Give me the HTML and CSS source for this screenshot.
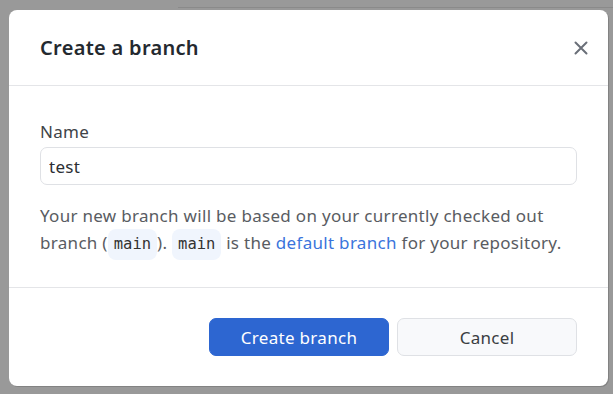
FILE: index.html
```html
<!DOCTYPE html>
<html lang="en">
<head>
    <meta charset="UTF-8">
    <title>Create a branch</title>
    <link rel="stylesheet" href="styles.css">
</head>
<body>
    <div class="backdrop-edge"></div>

    <!-- Create branch dialog -->
    <div class="dialog">
        <div class="dialog-header">
            <h1>Create a branch</h1>
            <button class="close-btn" aria-label="Close">
                <svg width="16" height="16" viewBox="0 0 16 16">
                    <path d="M2.5 2.5 L13.5 13.5 M13.5 2.5 L2.5 13.5" stroke="#6a6f78" stroke-width="2" stroke-linecap="round" fill="none"/>
                </svg>
            </button>
        </div>

        <div class="dialog-body">
            <label for="branch-name">Name</label>
            <input type="text" id="branch-name" value="test">
            <p class="hint">Your new branch will be based on your currently checked out <span class="current-branch">branch (<code>main</code>).</span> <code>main</code> is the <a href="#">default branch</a> for your repository.</p>
        </div>

        <div class="dialog-footer">
            <button class="btn btn-primary">Create branch</button>
            <button class="btn btn-secondary">Cancel</button>
        </div>
    </div>
</body>
</html>
```

FILE: styles.css
```css
body {
    margin: 0;
    background-color: #999999;
    font-family: 'Noto Sans', 'Open Sans', sans-serif;
    letter-spacing: 0.3px;
    padding: 10px 5px 8px 9px;
    height: 394px;
    box-sizing: border-box;
}
.backdrop-edge {
    position: absolute;
    top: 7px;
    left: 178px;
    right: 0;
    height: 1px;
    background-color: #8a8a8a;
}
.dialog {
    background-color: #ffffff;
    border-radius: 8px;
    width: 599px;
    height: 376px;
    box-shadow: 1px 1px 0 rgba(0, 0, 0, 0.15);
    display: flex;
    flex-direction: column;
}
.dialog-header {
    display: flex;
    align-items: center;
    justify-content: space-between;
    height: 75px;
    padding: 0 19px 0 31px;
    border-bottom: 1px solid #e4e5e8;
}
.dialog-header h1 {
    margin: 0;
    font-size: 20px;
    font-weight: 600;
    color: #24292f;
}
.close-btn {
    background: none;
    border: none;
    padding: 0;
    width: 16px;
    height: 16px;
    cursor: pointer;
}
.dialog-body {
    padding: 34px 31px 0 31px;
    border-bottom: 1px solid #e4e5e8;
    box-sizing: border-box;
    height: 202px;
}
.dialog-body label {
    display: block;
    font-size: 17px;
    color: #404348;
    margin-bottom: 4px;
    line-height: 23px;
}
.dialog-body input {
    width: 100%;
    height: 38px;
    box-sizing: border-box;
    border: 1px solid #dfe1e5;
    border-radius: 7px;
    padding: 0 8px;
    font-family: inherit;
    letter-spacing: 0.3px;
    font-size: 17px;
    color: #2b2e33;
    outline: none;
}
.hint {
    margin: 17px 0 0 0;
    font-size: 17px;
    line-height: 27px;
    color: #595c62;
}
.current-branch {
    white-space: nowrap;
}
.hint code {
    display: inline-block;
    font-family: 'DejaVu Sans Mono', monospace;
    font-size: 15.5px;
    letter-spacing: 0;
    line-height: 31px;
    height: 31px;
    margin: -2px 0;
    color: #333;
    background-color: #f0f5fd;
    border-radius: 8px;
    padding: 0 6px;
    vertical-align: middle;
}
.hint a {
    color: #3a74dc;
    text-decoration: none;
}
.dialog-footer {
    display: flex;
    justify-content: flex-end;
    gap: 8px;
    padding: 30px 31px 0 0;
}
.btn {
    width: 180px;
    height: 38px;
    border-radius: 7px;
    font-family: inherit;
    letter-spacing: 0.3px;
    font-size: 17px;
    cursor: pointer;
}
.btn-primary {
    background-color: #2d66d1;
    border: 1px solid #2d66d1;
    color: #ffffff;
}
.btn-secondary {
    background-color: #f8f9fb;
    border: 1px solid #dfe1e5;
    color: #3a3d42;
}
```
